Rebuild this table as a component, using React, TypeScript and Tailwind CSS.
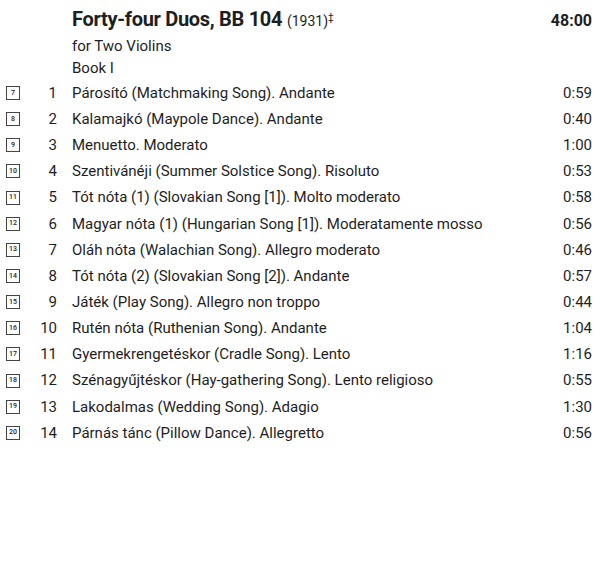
const tracks = [
  { cd: 7, no: 1, title: "Párosító (Matchmaking Song). Andante", time: "0:59" },
  { cd: 8, no: 2, title: "Kalamajkó (Maypole Dance). Andante", time: "0:40" },
  { cd: 9, no: 3, title: "Menuetto. Moderato", time: "1:00" },
  { cd: 10, no: 4, title: "Szentivánéji (Summer Solstice Song). Risoluto", time: "0:53" },
  { cd: 11, no: 5, title: "Tót nóta (1) (Slovakian Song [1]). Molto moderato", time: "0:58" },
  { cd: 12, no: 6, title: "Magyar nóta (1) (Hungarian Song [1]). Moderatamente mosso", time: "0:56" },
  { cd: 13, no: 7, title: "Oláh nóta (Walachian Song). Allegro moderato", time: "0:46" },
  { cd: 14, no: 8, title: "Tót nóta (2) (Slovakian Song [2]). Andante", time: "0:57" },
  { cd: 15, no: 9, title: "Játék (Play Song). Allegro non troppo", time: "0:44" },
  { cd: 16, no: 10, title: "Rutén nóta (Ruthenian Song). Andante", time: "1:04" },
  { cd: 17, no: 11, title: "Gyermekrengetéskor (Cradle Song). Lento", time: "1:16" },
  { cd: 18, no: 12, title: "Szénagyűjtéskor (Hay-gathering Song). Lento religioso", time: "0:55" },
  { cd: 19, no: 13, title: "Lakodalmas (Wedding Song). Adagio", time: "1:30" },
  { cd: 20, no: 14, title: "Párnás tánc (Pillow Dance). Allegretto", time: "0:56" },
];

export default function App() {
  return (
    <div className="w-[599px] h-[588px] bg-white text-[#1e1e1e] font-['Roboto',sans-serif] pt-[6px] pr-[7px]">
      {/* work heading */}
      <div className="flex items-baseline pl-[72px]">
        <h1 className="flex-1 text-[20px] leading-[27px] font-bold tracking-[-0.3px]">
          Forty-four Duos, BB 104{" "}
          <span className="text-[14px] font-normal tracking-normal">(1931)</span>
          <sup className="text-[10px] font-normal">‡</sup>
        </h1>
        <span className="text-[16px] font-bold">48:00</span>
      </div>
      <div className="pl-[72px] text-[15px] leading-[22px]">
        <div>for Two Violins</div>
        <div>Book I</div>
      </div>

      {/* tracklist */}
      <ul className="mt-[1px]">
        {tracks.map((t) => (
          <li key={t.cd} className="flex items-center h-[26.15px] text-[15px]">
            <span className="w-[14px] h-[14px] ml-[6px] border border-[#444] flex items-center justify-center text-[7px] leading-none font-medium">
              {t.cd}
            </span>
            <span className="w-[37px] text-right">{t.no}</span>
            <span className="flex-1 pl-[15px]">{t.title}</span>
            <span>{t.time}</span>
          </li>
        ))}
      </ul>
    </div>
  );
}
